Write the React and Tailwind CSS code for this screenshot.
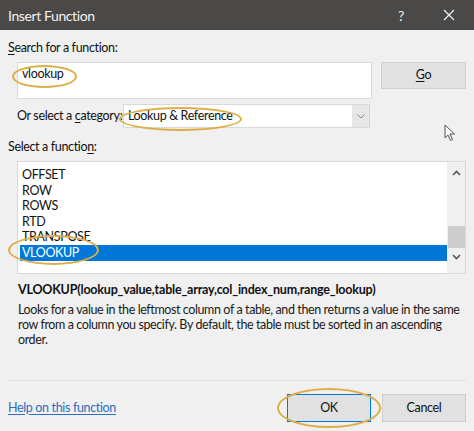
import React from "react";

const font = { fontFamily: 'Lato, "Noto Sans", sans-serif' };

function Ellipse({ className }) {
  return (
    <div
      className={
        "absolute rounded-[50%] border-2 border-[#dcae45] pointer-events-none " +
        className
      }
    />
  );
}

export default function App() {
  const items = ["OFFSET", "ROW", "ROWS", "RTD", "TRANSPOSE", "VLOOKUP"];
  return (
    <div
      className="relative w-[474px] h-[431px] bg-[#f0f0f0] text-[#111] overflow-hidden tracking-[-0.35px]"
      style={font}
    >
      {/* Title bar */}
      <div className="h-[30px] bg-[#4a4947] flex items-center pl-2 text-[#f2f2f2]">
        <span className="text-[14px] tracking-[-0.4px] flex-1">Insert Function</span>
        <span className="text-[14px] w-[20px] text-center mr-[31px]">?</span>
        <svg width="14" height="14" viewBox="0 0 14 14" className="mr-[18px]">
          <path d="M2 2 L12 12 M12 2 L2 12" stroke="#f2f2f2" strokeWidth="1.2" />
        </svg>
      </div>

      <div className="px-2 text-[12.5px]">
        <div className="mt-[10px] leading-[16px]">
          <span className="underline underline-offset-2">S</span>earch for a function:
        </div>

        <div className="flex mt-[6px] ml-[9px] gap-[9px]">
          <div className="w-[355px] h-[37px] bg-white border border-[#d9d9d9] px-[4px] pt-[2px] leading-[18px]">
            vlookup
          </div>
          <div className="w-[85px] h-[27px] bg-[#e1e1e1] border border-[#cfcfcf] flex items-center justify-center">
            <span>
              <span className="underline underline-offset-2">G</span>o
            </span>
          </div>
        </div>

        <div className="flex items-center mt-[5px] ml-[9px] h-[24px]">
          <span className="w-[106px] whitespace-nowrap">
            Or select a <span className="underline underline-offset-2">c</span>ategory:
          </span>
          <div className="w-[247px] h-[24px] bg-white border border-[#d9d9d9] flex">
            <div className="flex-1 pl-[4px] leading-[22px]">Lookup &amp; Reference</div>
            <div className="w-[17px] bg-[#e6e6e6] flex items-center justify-center">
              <svg width="8" height="5" viewBox="0 0 8 5">
                <path d="M0.5 0.5 L4 4 L7.5 0.5" stroke="#8a8a8a" fill="none" strokeWidth="1" />
              </svg>
            </div>
          </div>
        </div>

        <div className="mt-[11px] leading-[16px]">
          Select a functio<span className="underline underline-offset-2">n</span>:
        </div>

        <div className="mt-[6px] ml-[9px] w-[449px] h-[113px] bg-white border border-[#d9d9d9] flex">
          <div className="flex-1 pt-[5px] pl-[2px]">
            {items.map((it) => (
              <div
                key={it}
                className={
                  "h-[15.6px] leading-[15.6px] pl-[2px] " +
                  (it === "VLOOKUP" ? "bg-[#0078d7] text-white" : "")
                }
              >
                {it}
              </div>
            ))}
          </div>
          <div className="w-[18px] bg-[#f0f0f0] flex flex-col items-center">
            <svg width="9" height="6" viewBox="0 0 9 6" className="mt-[8px]">
              <path d="M1 5 L4.5 1.5 L8 5" stroke="#555" fill="none" strokeWidth="1.6" />
            </svg>
            <div className="mt-[50px] w-[17px] h-[22px] bg-[#cdcdcd]" />
            <svg width="9" height="6" viewBox="0 0 9 6" className="mt-[6px]">
              <path d="M1 1 L4.5 4.5 L8 1" stroke="#555" fill="none" strokeWidth="1.6" />
            </svg>
          </div>
        </div>

        <div className="mt-[8px] ml-[10px] font-bold leading-[16px] tracking-[-0.2px]">
          VLOOKUP(lookup_value,table_array,col_index_num,range_lookup)
        </div>
        <div className="mt-[4px] ml-[10px] leading-[15px] tracking-[-0.4px] text-[#1a1a1a]">
          Looks for a value in the leftmost column of a table, and then returns a value in the same
          row from a column you specify. By default, the table must be sorted in an ascending
          order.
        </div>
      </div>

      {/* Separator */}
      <div className="absolute left-[8px] right-[8px] top-[380px] h-px bg-[#dedede]" />

      {/* Footer */}
      <div className="absolute left-0 right-0 top-[394px] flex items-center px-2 text-[12.5px]">
        <span className="flex-1 text-[#2a6ebd] underline underline-offset-2">
          Help on this function
        </span>
        <div className="w-[84px] h-[28px] bg-[#e1e1e1] border border-[#0078d7] flex items-center justify-center mr-[11px]">
          OK
        </div>
        <div className="w-[84px] h-[28px] bg-[#e1e1e1] border border-[#cfcfcf] flex items-center justify-center">
          Cancel
        </div>
      </div>

      {/* Annotation ellipses */}
      <Ellipse className="left-[12px] top-[65px] w-[65px] h-[23px]" />
      <Ellipse className="left-[119px] top-[107px] w-[123px] h-[24px]" />
      <Ellipse className="left-[8px] top-[235px] w-[91px] h-[30px]" />
      <Ellipse className="left-[277px] top-[388px] w-[104px] h-[40px]" />

      {/* Mouse cursor */}
      <svg
        className="absolute left-[444px] top-[124px]"
        width="12"
        height="18"
        viewBox="0 0 12 18"
      >
        <path
          d="M1 1 L1 14 L4 11 L6.5 16.5 L8.5 15.5 L6 10 L10.5 10 Z"
          fill="#fafafa"
          stroke="#555"
          strokeWidth="1"
        />
      </svg>
    </div>
  );
}
